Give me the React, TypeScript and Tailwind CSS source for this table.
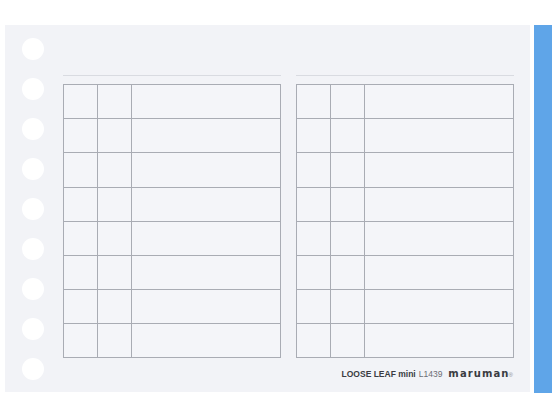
import React from "react";

const rows = [0, 1, 2, 3, 4, 5, 6, 7];
const holes = [0, 1, 2, 3, 4, 5, 6, 7, 8];

function Table() {
  return (
    <div className="flex flex-col w-[218px]">
      <div className="h-px w-full bg-[#d9dbe1] mb-[8px]" />
      <div className="border-t border-x border-[#a9acb4] bg-[#f4f5f9]">
        {rows.map((r) => (
          <div key={r} className={`flex border-b border-[#a9acb4] ${r === 2 ? "h-[35px]" : "h-[34px]"}`}>
            <div className="w-[34px] border-r border-[#a9acb4]" />
            <div className="w-[34px] border-r border-[#a9acb4]" />
            <div className="flex-1" />
          </div>
        ))}
      </div>
    </div>
  );
}

export default function App() {
  return (
    <div className="w-[560px] h-[420px] bg-white flex pt-[25px] pl-[5px] gap-[4px]" style={{ fontFamily: '"Liberation Sans", Arial, sans-serif' }}>
      <div className="w-[525px] h-[367px] bg-[#f2f3f7] flex pl-[17px]">
        <div className="flex flex-col gap-[18px] pt-[13px] w-[22px]">
          {holes.map((h) => (
            <div key={h} className="w-[22px] h-[22px] rounded-full bg-white" />
          ))}
        </div>
        <div className="flex flex-col ml-[19px] pt-[50px]">
          <div className="flex gap-[15px]">
            <Table />
            <Table />
          </div>
          <div className="flex items-baseline justify-end mt-[11px] leading-none pr-[1px]">
            <span className="text-[8.5px] font-bold text-[#3a3c42]">LOOSE LEAF mini</span>
            <span className="text-[8.5px] text-[#6b6d74] ml-[3px]">L1439</span>
            <span className="text-[10px] font-bold tracking-[1.1px] text-[#3a3c42] ml-[6px]" style={{ fontFamily: '"DejaVu Sans", sans-serif' }}>
              maruman
            </span>
            <span className="text-[6px] text-[#8a8c92] -ml-[1px]">®</span>
          </div>
        </div>
      </div>
      <div className="w-[18px] h-[368px] bg-[#5fa5e8]" />
    </div>
  );
}
